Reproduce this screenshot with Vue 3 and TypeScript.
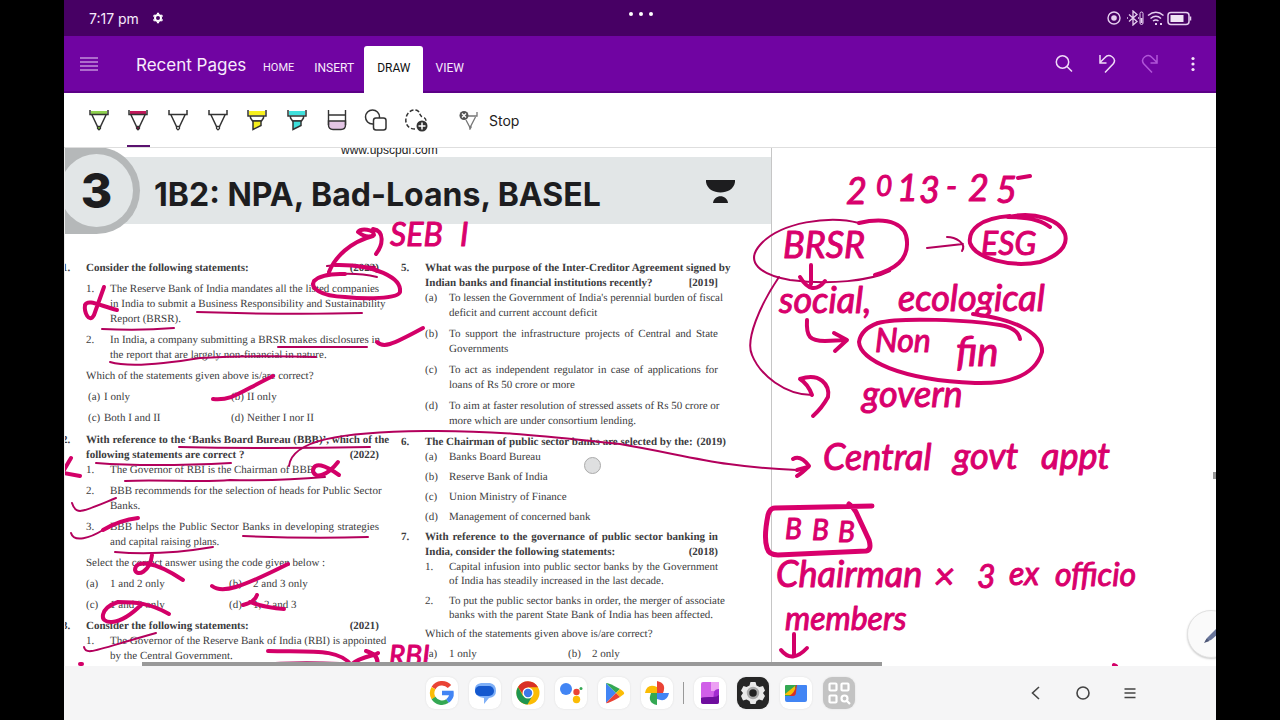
<script setup lang="ts">
interface Row {
  kind: 'stem' | 'item' | 'text' | 'pair'
  num?: string
  mark?: string
  full?: string[]
  last?: string
  year?: string
  pair?: [string, string, string, string]
  tight?: boolean
  dense?: boolean
  gap?: 'none' | 'small' | 'mid' | 'large'
}

const leftRows: Row[] = [
  { kind: 'stem', num: '1.', last: 'Consider the following statements:', year: '(2023)', gap: 'none' },
  { kind: 'item', mark: '1.', full: ['The Reserve Bank of India mandates all the listed companies', 'in India to submit a Business Responsibility and Sustainability'], last: 'Report (BRSR).', gap: 'mid' },
  { kind: 'item', mark: '2.', full: ['In India, a company submitting a BRSR makes disclosures in'], last: 'the report that are largely non-financial in nature.', gap: 'mid' },
  { kind: 'text', last: 'Which of the statements given above is/are correct?', gap: 'mid' },
  { kind: 'pair', pair: ['(a)', 'I only', '(b)', 'II only'], tight: true, gap: 'mid' },
  { kind: 'pair', pair: ['(c)', 'Both I and II', '(d)', 'Neither I nor II'], tight: true, gap: 'mid' },
  { kind: 'stem', num: '2.', full: ['With reference to the ‘Banks Board Bureau (BBB)’, which of the'], last: 'following statements are correct ?', year: '(2022)', gap: 'large' },
  { kind: 'item', mark: '1.', last: 'The Governor of RBI is the Chairman of BBB.', gap: 'none' },
  { kind: 'item', mark: '2.', full: ['BBB recommends for the selection of heads for Public Sector'], last: 'Banks.', gap: 'mid' },
  { kind: 'item', mark: '3.', full: ['BBB helps the Public Sector Banks in developing strategies'], last: 'and capital raising plans.', gap: 'mid' },
  { kind: 'text', last: 'Select the correct answer using the code given below :', gap: 'mid' },
  { kind: 'pair', pair: ['(a)', '1 and 2 only', '(b)', '2 and 3 only'], gap: 'mid' },
  { kind: 'pair', pair: ['(c)', '1 and 3 only', '(d)', '1, 2 and 3'], gap: 'mid' },
  { kind: 'stem', num: '3.', last: 'Consider the following statements:', year: '(2021)', gap: 'mid' },
  { kind: 'item', mark: '1.', full: ['The Governor of the Reserve Bank of India (RBI) is appointed'], last: 'by the Central Government.', gap: 'none' },
]

const rightRows: Row[] = [
  { kind: 'stem', num: '5.', full: ['What was the purpose of the Inter-Creditor Agreement signed by'], last: 'Indian banks and financial institutions recently?', year: '[2019]', gap: 'none' },
  { kind: 'item', mark: '(a)', full: ["To lessen the Government of India's perennial burden of fiscal"], last: 'deficit and current account deficit', gap: 'none' },
  { kind: 'item', mark: '(b)', full: ['To support the infrastructure projects of Central and State'], last: 'Governments', gap: 'mid' },
  { kind: 'item', mark: '(c)', full: ['To act as independent regulator in case of applications for'], last: 'loans of Rs 50 crore or more', gap: 'mid' },
  { kind: 'item', mark: '(d)', full: ['To aim at faster resolution of stressed assets of Rs 50 crore or'], last: 'more which are under consortium lending.', gap: 'mid' },
  { kind: 'stem', num: '6.', last: 'The Chairman of public sector banks are selected by the:', year: '(2019)', gap: 'mid' },
  { kind: 'item', mark: '(a)', last: 'Banks Board Bureau', gap: 'none' },
  { kind: 'item', mark: '(b)', last: 'Reserve Bank of India', gap: 'small' },
  { kind: 'item', mark: '(c)', last: 'Union Ministry of Finance', gap: 'small' },
  { kind: 'item', mark: '(d)', last: 'Management of concerned bank', gap: 'small' },
  { kind: 'stem', num: '7.', full: ['With reference to the governance of public sector banking in'], last: 'India, consider the following statements:', year: '(2018)', gap: 'small' },
  { kind: 'item', mark: '1.', full: ['Capital infusion into public sector banks by the Government'], last: 'of India has steadily increased in the last decade.', dense: true, gap: 'none' },
  { kind: 'item', mark: '2.', full: ['To put the public sector banks in order, the merger of associate'], last: 'banks with the parent State Bank of India has been affected.', dense: true, gap: 'mid' },
  { kind: 'text', last: 'Which of the statements given above is/are correct?', gap: 'small' },
  { kind: 'pair', pair: ['(a)', '1 only', '(b)', '2 only'], gap: 'small' },
]

const columns = [leftRows, rightRows]

const tabs = ['HOME', 'INSERT', 'DRAW', 'VIEW']
const pens = [
  { name: 'Green pen', fill: '#8fd14f', tip: '#6fae2e', active: false },
  { name: 'Magenta pen', fill: '#c2185b', tip: '#7a1140', active: true },
  { name: 'Pen', fill: 'none', tip: 'none', active: false },
  { name: 'Fine pen', fill: 'none', tip: 'none', active: false },
]
const markers = [
  { name: 'Yellow highlighter', fill: '#f7f01e' },
  { name: 'Cyan highlighter', fill: '#3fe0dc' },
]

interface Word { t: string; x: number; y: number; s: 'sm' | 'md' | 'lg' | 'xl' }
const words: Word[] = [
  { t: 'SEB', x: 390, y: 246, s: 'md' },
  { t: 'I', x: 460, y: 246, s: 'md' },
  { t: '2', x: 846, y: 204, s: 'lg' },
  { t: '0', x: 876, y: 196, s: 'sm' },
  { t: '1', x: 897, y: 201, s: 'lg' },
  { t: '3', x: 919, y: 203, s: 'lg' },
  { t: '-', x: 946, y: 198, s: 'md' },
  { t: '2', x: 968, y: 201, s: 'lg' },
  { t: '5', x: 996, y: 203, s: 'lg' },
  { t: 'BRSR', x: 783, y: 258, s: 'lg' },
  { t: 'ESG', x: 981, y: 255, s: 'md' },
  { t: 'social,', x: 779, y: 313, s: 'lg' },
  { t: 'ecological', x: 898, y: 311, s: 'lg' },
  { t: 'Non', x: 875, y: 352, s: 'md' },
  { t: 'fin', x: 956, y: 366, s: 'xl' },
  { t: 'govern', x: 862, y: 407, s: 'lg' },
  { t: 'Central', x: 823, y: 470, s: 'lg' },
  { t: 'govt', x: 953, y: 469, s: 'lg' },
  { t: 'appt', x: 1041, y: 469, s: 'lg' },
  { t: 'B', x: 785, y: 539, s: 'sm' },
  { t: 'B', x: 812, y: 540, s: 'sm' },
  { t: 'B', x: 838, y: 542, s: 'sm' },
  { t: 'Chairman', x: 776, y: 587, s: 'lg' },
  { t: '×', x: 934, y: 589, s: 'lg' },
  { t: '3', x: 977, y: 588, s: 'md' },
  { t: 'ex', x: 1009, y: 585, s: 'md' },
  { t: 'officio', x: 1055, y: 586, s: 'md' },
  { t: 'members', x: 785, y: 630, s: 'md' },
  { t: 'RBI', x: 389, y: 666, s: 'sm' },
]

const thin = [
  'M197 312Q290 315 362 313', 'M102 329Q140 331 174 328', 'M278 347H367',
  'M110 362C130 368 170 363 200 358Q260 355 316 357', 'M179 447Q270 449 370 447',
  'M96 463Q150 467 231 463', 'M125 481C160 479 200 483 230 480Q280 481 325 477',
  'M289 466C292 440 340 432 425 431C500 430 560 438 620 444C690 456 720 467 797 470',
  'M72 503C76 516 82 512 116 498', 'M71 533C74 543 90 538 103 530', 'M243 536Q310 539 368 537',
  'M115 552Q160 556 213 547', 'M84 647C86 656 95 650 156 633', 'M240 665Q290 661 340 663',
  'M327 266C345 263 355 266 375 267', 'M340 274Q360 273 377 277',
  'M779 277C760 305 745 340 752 355C760 375 785 395 812 395', 'M859 223C830 215 780 222 760 245C745 262 760 275 790 280C830 285 870 281 890 271',
  'M927 248L963 244M947 237C955 237 967 243 962 251',
]
const thick = [
  'M329 272C335 257 350 242 373 236M358 232C361 228 374 229 374 235Q367 239 358 232M373 229C385 231 383 245 376 254',
  'M335 265C375 264 402 278 400 292C398 299 365 299 345 297C320 296 310 288 314 281Q322 273 345 274',
  'M104 287L94 315C89 324 84 312 85 305C88 299 98 305 117 310',
  'M377 342C383 348 390 346 423 328', 'M213 399C232 401 240 392 273 376',
  'M338 462C328 475 315 480 313 471C314 461 325 465 339 475',
  'M71 458L64 470M64 473L80 476', 'M103 530Q120 520 138 518',
  'M152 555C150 572 137 577 135 570C135 560 153 560 183 580',
  'M212 586C222 594 240 588 288 564',
  'M169 614C150 603 135 602 118 602C100 608 98 623 112 622C125 621 137 609 142 604',
  'M243 605Q255 602 257 595M250 602Q265 608 284 609',
  'M268 651C310 652 340 648 352 666', 'M352 664C362 656 375 656 378 653M366 651Q380 655 377 666',
  'M859 223C890 216 907 225 907 242C908 260 895 269 875 275',
  'M811 265V284M800 277Q812 297 825 281',
  'M812 395Q808 384 800 379C820 372 830 385 828 397Q822 408 813 416',
  'M1010 216C980 218 968 230 970 243C975 258 1010 268 1040 262C1060 255 1068 245 1065 234C1060 220 1035 211 1008 217Q1038 217 1050 227',
  'M807 320C806 337 810 341 825 341L846 340M834 333L847 340L835 351',
  'M878 323C900 317 970 320 1000 325Q1018 328 1020 339',
  'M973 314C1020 320 1043 335 1042 352C1035 375 1010 384 975 383C900 380 860 360 859 342Q861 329 878 323',
  'M793 459C800 455 806 462 809 466Q802 473 797 476', 'M797 470L808 467',
  'M794 634V656M781 650Q792 664 807 648', 'M846 667Q852 662 862 667', 'M1114 665L1116 666', 'M80 664L82 664', 'M1018 178L1030 176',
]
</script>

<template>
  <div class="device">
    <header class="status">
      <div class="clock">
        <span>7:17 pm</span>
        <svg class="gear" viewBox="0 0 12 12"><circle cx="6" cy="6" r="3" fill="none" stroke="#fff" stroke-width="2" /><path d="M6 0.8V2M6 10V11.2M1.5 3.4L2.6 4M9.4 8L10.5 8.6M1.5 8.6L2.6 8M9.4 4L10.5 3.4" stroke="#fff" stroke-width="2.2" /></svg>
      </div>
      <svg class="dots" viewBox="0 0 26 6"><circle cx="3" cy="3" r="2" /><circle cx="13" cy="3" r="2" /><circle cx="23" cy="3" r="2" /></svg>
      <svg class="signals" viewBox="0 0 86 16" fill="none" stroke="#e6cff0">
        <circle cx="8" cy="8" r="6" stroke-width="1.4" /><circle cx="8" cy="8" r="2.8" fill="#e6cff0" stroke="none" />
        <path d="M23 4.500L31 11.500L27 15V1L31 4.500L23 11.500M21 8h1M32 8h1" stroke-width="1.3" />
        <rect x="34" y="2" width="3" height="12.500" rx="1.500" stroke-width="1" /><path d="M35.500 8V13" stroke-width="2" />
        <path d="M42 5.500Q50 -1 57.500 5.500M44.500 8.500Q50 4 55 8.500M47 11Q50 8.800 52.500 11" stroke-width="1.5" /><path d="M49 14h2M54 14h2" stroke-width="2" />
        <rect x="62" y="2.500" width="21" height="12" rx="3" stroke-width="1.500" /><rect x="64.500" y="5" width="13" height="7" fill="#f0e4f5" stroke="none" /><path d="M84.500 6.500v4" stroke-width="1.500" />
      </svg>
    </header>

    <div class="appbar">
      <button class="menu" aria-label="Menu"><svg viewBox="0 0 18 16"><path d="M0 2H18M0 6H18M0 10H18M0 14H18" stroke="#e9d3f5" stroke-width="1.2" /></svg></button>
      <h1>Recent Pages</h1>
      <nav class="tabs">
        <button v-for="tab in tabs" :key="tab" :class="['tab', tab.toLowerCase(), { current: tab === 'DRAW' }]">{{ tab }}</button>
      </nav>
      <div class="actions">
        <button aria-label="Search"><svg viewBox="0 0 20 20" fill="none" stroke="#f0dcf8" stroke-width="1.5"><circle cx="8.500" cy="8" r="6.200" /><path d="M13 12.500L18 17.500" /></svg></button>
        <button aria-label="Undo"><svg viewBox="0 0 20 20" fill="none" stroke="#f0dcf8" stroke-width="1.5"><path d="M3 1V9H9.500M3 8.500L8 3.500C12-1 20 4 16.500 9.500L8 18.500" /></svg></button>
        <button aria-label="Redo"><svg viewBox="0 0 20 20" fill="none" stroke="#b055d8" stroke-width="1.5"><path d="M17 1V9H10.500M17 8.500L12 3.500C8-1 0 4 3.500 9.500L12 18.500" /></svg></button>
        <button aria-label="More"><svg viewBox="0 0 20 20" fill="#f5e6fb"><circle cx="10" cy="4.500" r="1.600" /><circle cx="10" cy="10" r="1.600" /><circle cx="10" cy="15.500" r="1.600" /></svg></button>
      </div>
    </div>

    <div class="toolbar">
      <div class="tools">
        <button v-for="pen in pens" :key="pen.name" :aria-label="pen.name" :class="{ active: pen.active }">
          <svg viewBox="0 0 24 24" fill="none" stroke="#333" stroke-width="1.5">
            <path d="M4 3H20V6H4Z" :fill="pen.fill" stroke="none" />
            <path d="M3 2V6.500H21V2M5 7L10.500 18.500H13.500L19 7" />
            <path d="M10.500 18.500V20.500L12 22L13.500 20.500V18.500Z" :fill="pen.tip" stroke-width="1.200" />
          </svg>
        </button>
        <button v-for="marker in markers" :key="marker.name" :aria-label="marker.name">
          <svg viewBox="0 0 24 24" fill="none" stroke="#333" stroke-width="1.5">
            <path d="M4 3H20V7.500H4Z" :fill="marker.fill" stroke="none" />
            <path d="M3 2V8H21V2M5.500 8V10L7.500 13H16.500L18.500 10V8" />
            <path d="M8 13V21.500L16 17.500V13Z" :fill="marker.fill" />
          </svg>
        </button>
        <button aria-label="Eraser">
          <svg viewBox="0 0 24 24" fill="none" stroke="#333" stroke-width="1.400"><path d="M3.500 13H20.500V17Q20.500 21.500 16 21.500H8Q3.500 21.500 3.500 17Z" fill="#e3c5e4" /><path d="M3.500 2V17M20.500 2V17M3.500 7H20.500" /></svg>
        </button>
        <button aria-label="Shapes">
          <svg viewBox="0 0 24 24" fill="#fff" stroke="#333" stroke-width="1.500"><circle cx="8.500" cy="9" r="7" /><rect x="9.500" y="10" width="12.500" height="12" rx="2.500" /></svg>
        </button>
        <button aria-label="Lasso select">
          <svg viewBox="0 0 24 24" fill="none" stroke="#333" stroke-width="1.500"><path d="M11 21C4 21 1 16 2 10C3 4 9 0 14 3C17 6 15 8 19 9Q22 10 22 13" stroke-dasharray="4 2" /><circle cx="18" cy="18" r="5.500" fill="#333" stroke="none" /><path d="M14.500 18H21.500M18 14.500V21.500" stroke="#fff" /></svg>
        </button>
      </div>
      <button class="stop">
        <svg viewBox="0 0 20 20" fill="none" stroke="#777" stroke-width="1.300"><path d="M9 6H18V2M7 10L11 17.500L16.500 7M10.500 16.500L11 19L12.500 16.500" /><circle cx="5" cy="5.500" r="4.500" fill="#555" stroke="none" /><path d="M3 3.500L7 7.500M7 3.500L3 7.500" stroke="#fff" /></svg>
        <span>Stop</span>
      </button>
    </div>

    <main class="canvas">
      <article class="sheet">
        <p class="site">www.upscpdf.com</p>
        <div class="banner">
          <div class="badge"><span>3</span></div>
          <h2>1B2: NPA, Bad-Loans, BASEL</h2>
          <svg class="lamp" viewBox="0 0 30 24" fill="#1d1d1f"><path d="M0 0H29V2C27 16 2 16 0 2Z" /><path d="M7 23C8 14 21 14 22 23Z" /></svg>
        </div>
        <div class="columns">
          <section v-for="(col, c) in columns" :key="c" class="column">
            <div v-for="(row, r) in col" :key="r" :class="['row', row.kind, row.gap, { dense: row.dense }]">
              <span v-if="row.num" class="num">{{ row.num }}</span>
              <span v-if="row.mark" class="mark">{{ row.mark }}</span>
              <div v-if="row.pair" :class="['choices', { tight: row.tight }]">
                <span>{{ row.pair[0] }}</span><span>{{ row.pair[1] }}</span>
                <span>{{ row.pair[2] }}</span><span>{{ row.pair[3] }}</span>
              </div>
              <div v-else class="body">
                <p v-for="line in row.full" :key="line" class="full">{{ line }}</p>
                <p class="last"><span>{{ row.last }}</span><span v-if="row.year">{{ row.year }}</span></p>
              </div>
            </div>
          </section>
        </div>
      </article>

      <svg class="ink" viewBox="64 148 1152 518">
        <g class="thin"><path v-for="d in thin" :key="d" :d="d" /></g>
        <g class="thick"><path v-for="d in thick" :key="d" :d="d" /></g>
        <path class="box" d="M872 506L775 508Q770 508 768 515C765 530 765 542 767 548Q769 555 778 555L866 551Q872 550 869 540L856 512Q853 507 849 504" />
        <text v-for="(w, i) in words" :key="i" :x="w.x" :y="w.y" :class="w.s">{{ w.t }}</text>
      </svg>
      <span class="pointer"></span>
      <span class="track"></span>
      <span class="vtrack"></span>
      <button class="fab" aria-label="Draw"><svg viewBox="0 0 30 30"><path d="M5 23L7 19L21 5L25 9L11 21Z" fill="#68759a" /><path d="M4 24L6.500 19.500L9.500 22Z" fill="#4d5776" /></svg></button>
    </main>

    <footer class="taskbar">
      <div class="dock">
        <button aria-label="Google"><svg viewBox="0 0 32 32" fill="none" stroke-width="4.500"><path d="M23.500 9.500A10 10 0 0 0 7.500 11" stroke="#e94335" /><path d="M7.500 11A10 10 0 0 0 7.500 21" stroke="#fbbc05" /><path d="M7.500 21A10 10 0 0 0 21.500 24" stroke="#34a853" /><path d="M21.500 24Q26 20.500 25.500 16H16" stroke="#4285f4" /></svg></button>
        <button aria-label="Messages"><svg viewBox="0 0 32 32"><path d="M12 6H21Q27 7 27 14Q27 20 20 21L15 27V21Q7 20 6 14Q5 7 12 6Z" fill="#7fb0f7" /><rect x="6" y="9" width="19" height="10" rx="5" fill="#1458ce" /></svg></button>
        <button aria-label="Chrome"><svg viewBox="0 0 32 32"><circle cx="16" cy="16" r="11.500" fill="#fbbc05" /><path d="M6 10A11.500 11.500 0 0 1 26 10.300H16L11.500 18Z" fill="#d93025" /><path d="M6 10A11.500 11.500 0 0 0 15.500 27.500L20.500 18.500L11 19Z" fill="#1e9650" /><circle cx="16" cy="16" r="5.500" fill="#fff" /><circle cx="16" cy="16" r="4.200" fill="#3b78e7" /></svg></button>
        <button aria-label="Assistant"><svg viewBox="0 0 32 32"><circle cx="11" cy="12" r="6" fill="#4285f4" /><circle cx="21.500" cy="15" r="3.200" fill="#ea4335" /><circle cx="26" cy="11.500" r="1.500" fill="#34a853" /><circle cx="21.500" cy="22.500" r="3.700" fill="#fbbc05" /></svg></button>
        <button aria-label="Play Store"><svg viewBox="0 0 32 32"><path d="M8 6L18 16L8 26Z" fill="#4285f4" /><path d="M8 6Q10 5 22 12L18 16Z" fill="#34a853" /><path d="M22 12Q27 15 26 17L22 20L18 16Z" fill="#fbbc05" /><path d="M8 26Q10 27 22 20L18 16Z" fill="#ea4335" /></svg></button>
        <button aria-label="Photos"><svg viewBox="0 0 32 32"><path d="M16 4V16H22Q26 6 16 4Z" fill="#ea4335" /><path d="M28 16H16V22Q26 26 28 16Z" fill="#4285f4" /><path d="M16 28V16H10Q6 26 16 28Z" fill="#34a853" /><path d="M4 16H16V10Q6 6 4 16Z" fill="#fbbc05" /></svg></button>
        <span class="divider"></span>
        <button aria-label="OneNote"><svg viewBox="0 0 32 32"><rect x="7" y="5" width="18" height="22" rx="2" fill="#d05ee8" /><path d="M17 5H25V14H17Z" fill="#eca0f3" /><path d="M20 15Q21 12 25 12V24H19Z" fill="#a22bd0" /><path d="M7 21Q9 20 15 20H19Q23 20 25 18V25Q25 27 23 27H9Q7 27 7 25Z" fill="#6f0e9e" /></svg></button>
        <button class="dark" aria-label="Settings"><svg viewBox="0 0 32 32"><path d="M13.500 5H18.500L19.500 8.500L22.500 10L26 9L28 13.500L26 16L28 19L25.500 23.500L22 22.500L19.500 24L18.500 27H13.500L12.500 24L9.500 22.500L6 23.500L4 19L6 16L4 13.500L6.500 9L9.500 10L12.500 8.500Z" fill="#e9e9e9" /><circle cx="16" cy="16" r="5" fill="#222" stroke="#aaa" stroke-width="2.500" /></svg></button>
        <button aria-label="Files"><svg viewBox="0 0 32 32"><path d="M5 9Q5 8 6 8H16V11L12 20H5Z" fill="#34a853" /><path d="M5 17L15 9V18H5Z" fill="#fbbc05" /><path d="M9 19Q15 16 16 8H18V20Z" fill="#d93025" /><path d="M17 8H26Q27 8 27 9V23Q27 25 25 25H7Q5 25 5 23V19H13Q16 19 16 15Z" fill="#4285f4" /></svg></button>
        <button class="grey" aria-label="App search"><svg viewBox="0 0 32 32" fill="none" stroke="#fff" stroke-width="2.200"><rect x="6.500" y="6.500" width="7" height="7" rx="1" /><rect x="18.500" y="6.500" width="7" height="7" rx="1" /><rect x="6.500" y="18.500" width="7" height="7" rx="1" /><circle cx="21.500" cy="21.500" r="3" /><path d="M23.500 23.500L27 27" /></svg></button>
      </div>
      <nav class="system">
        <button aria-label="Back"><svg viewBox="0 0 16 16"><path d="M11 2L4.500 8L11 14" /></svg></button>
        <button aria-label="Home"><svg viewBox="0 0 16 16"><circle cx="8" cy="8" r="6" /></svg></button>
        <button aria-label="Recents"><svg viewBox="0 0 16 16"><path d="M2.500 4H13.500M2.500 8H13.500M2.500 12.500H13.500" /></svg></button>
      </nav>
    </footer>
  </div>
</template>

<style>
html, body { background: #000; }
#app { height: 100vh; }
</style>

<style scoped>
* { box-sizing: border-box; margin: 0; padding: 0; }
button { border: 0; background: none; font: inherit; color: inherit; display: flex; align-items: center; justify-content: center; }
svg { display: block; }
.device { height: 100vh; margin: 0 5vw; display: flex; flex-direction: column; background: #fff; overflow: hidden; font-family: Inter, "Liberation Sans", sans-serif; }

.status { height: 36px; flex: none; background: #470064; color: #f6eafa; display: grid; grid-template-columns: 1fr auto 1fr; align-items: center; padding: 0 24px 0 25px; }
.clock { display: flex; align-items: center; gap: 13px; font-size: 14px; }
.gear { width: 12px; height: 12px; }
.dots { width: 26px; height: 6px; fill: #fff; margin-bottom: 8px; }
.signals { width: 86px; height: 16px; justify-self: end; }

.appbar { height: 57px; flex: none; background: #7004a2; border-bottom: 2px solid #5c0087; color: #f8ebfc; display: flex; align-items: center; }
.menu { width: 50px; height: 40px; }
.menu svg { width: 18px; height: 16px; }
h1 { font-size: 17px; font-weight: 400; margin-left: 22px; width: 117px; padding-top: 3px; white-space: nowrap; }
.tabs { display: flex; align-self: stretch; margin-bottom: -2px; padding-top: 10px; }
.tab { padding: 0 12px 4px; font-family: Roboto, sans-serif; font-size: 12px; border-radius: 3px 3px 0 0; }
.tab.home { font-size: 11px; }
.tab.home, .tab.insert { padding: 0 10px 4px; }
.tab.current { background: #fff; color: #111; padding: 0 13px 4px; }
.actions { margin-left: auto; display: flex; gap: 23px; padding-right: 13px; }
.actions svg { width: 20px; height: 20px; }

.toolbar { height: 55px; flex: none; display: flex; align-items: stretch; padding-left: 15px; background: #fff; border-bottom: 1px solid #dedede; }
.tools { width: 357px; display: grid; grid-template-columns: repeat(9, 1fr); }
.tools button { position: relative; }
.tools svg { width: 24px; height: 24px; }
.tools .active::after { content: ""; position: absolute; left: 8px; right: 8px; bottom: 0; height: 2px; background: #5a126f; }
.stop { margin-left: 23px; gap: 10px; font-size: 14px; color: #222; }
.stop svg { width: 20px; height: 20px; }

.canvas { flex: 1; min-height: 0; position: relative; overflow: hidden; border-left: 1px solid #eee; }
.sheet { width: 707px; height: 100%; border-right: 1px solid #c6c6c6; overflow: hidden; background: #fff; }
.site { height: 9px; padding-left: 276px; font: 12px/4px "Liberation Sans", Arial, sans-serif; color: #222; }
.banner { height: 67px; background: #e2e6e7; display: flex; align-items: center; position: relative; padding: 8px 35px 0 89px; }
.badge { position: absolute; left: 0; top: -10px; width: 75px; height: 87px; background: #b5b8b9; border-radius: 0 44px 44px 0; overflow: hidden; }
.badge span { position: absolute; left: -5px; top: 7px; width: 73px; height: 73px; border-radius: 50%; background: #e2e6e7; color: #1d1d1f; font-size: 48px; font-weight: 800; line-height: 73px; text-align: center; }
h2 { font-size: 32px; font-weight: 700; line-height: 38px; color: #1d1d1f; white-space: nowrap; }
.lamp { width: 30px; height: 24px; margin-left: auto; margin-bottom: 6px; }

.columns { display: grid; grid-template-columns: 293px 293px; column-gap: 46px; padding: 37px 0 0 21px; font-family: "Liberation Serif", serif; font-size: 11px; line-height: 15px; color: #3c3c3e; text-rendering: geometricPrecision; }
.row { display: flex; position: relative; }
.dense { line-height: 14px; }
.small { margin-top: 5px; }
.mid { margin-top: 6px; }
.large { margin-top: 7px; }
.num { position: absolute; left: -24px; }
.stem { font-weight: 700; }
.body { flex: 1; min-width: 0; white-space: nowrap; }
.mark { width: 24px; flex: none; }
.full { text-align: justify; text-align-last: justify; }
.last { display: flex; justify-content: space-between; gap: 4px; }
.choices { flex: 1; display: grid; grid-template-columns: 24px 119px 24px 1fr; }
.choices.tight { padding-left: 2px; grid-template-columns: 16px 127px 16px 1fr; }

.ink { position: absolute; left: -1px; top: 0; width: 1152px; height: 518px; fill: none; stroke-linecap: round; stroke-linejoin: round; }
.thin { stroke: #b3005c; stroke-width: 2; }
.thick { stroke: #d30068; stroke-width: 4; }
.box { stroke: #d9006c; stroke-width: 5; }
.ink text { fill: #d9006c; font-family: Lato, "Open Sans", sans-serif; font-style: italic; font-weight: 400; stroke: #d9006c; stroke-width: 1; }
.ink .sm { font-size: 28px; }
.ink .md { font-size: 32px; }
.ink .lg { font-size: 36px; }
.ink .xl { font-size: 40px; }
.pointer { position: absolute; left: 519px; top: 309px; width: 17px; height: 17px; border-radius: 50%; background: #dedfe0; border: 1px solid #aaa; }
.track { position: absolute; left: 77px; bottom: 0; width: 740px; height: 4px; background: #999; }
.vtrack { position: absolute; right: 0; top: 324px; width: 3px; height: 7px; background: #999; }
.fab { position: absolute; right: -19px; top: 462px; width: 48px; height: 48px; border-radius: 50%; background: #fafafa; border: 1px solid #e2e2e2; box-shadow: 0 1px 2px #ccc; }
.fab svg { width: 30px; height: 30px; margin-left: 8px; }

.taskbar { height: 54px; flex: none; background: #f5f5f6; display: grid; grid-template-columns: 1fr auto 1fr; align-items: center; }
.dock { display: flex; align-items: center; gap: 11px; grid-column: 2; }
.dock button { width: 32px; height: 32px; border-radius: 9px; background: #fff; box-shadow: 0 0 2px #ddd; }
.dock svg { width: 32px; height: 32px; }
.dock .dark { background: #262626; }
.dock .grey { background: #c3c3c3; }
.divider { width: 1px; height: 22px; background: #999; margin: 0 -1px; }
.system { display: flex; gap: 31px; justify-self: end; padding-right: 78px; }
.system svg { width: 16px; height: 16px; fill: none; stroke: #444; stroke-width: 1.6; }
</style>
